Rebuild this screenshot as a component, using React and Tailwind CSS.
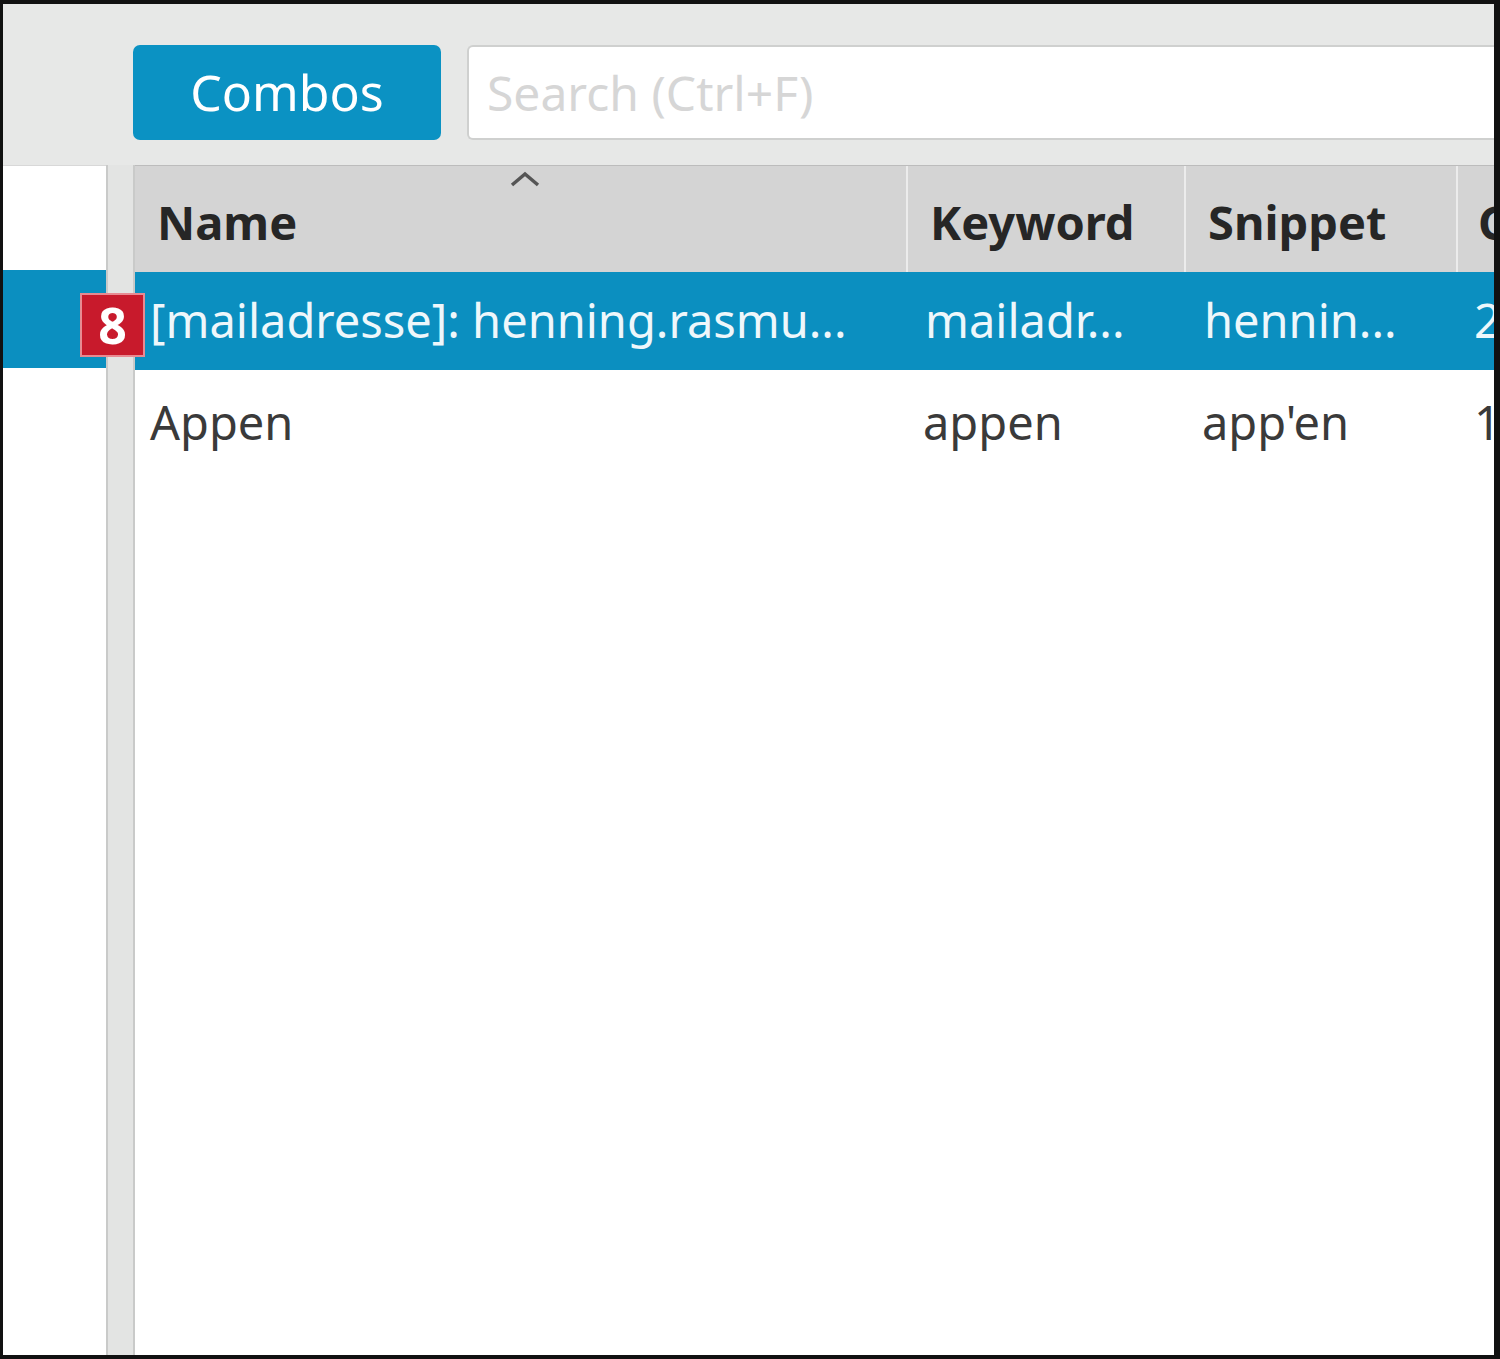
export default function App() {
  const font = { fontFamily: '"Noto Sans", "Open Sans", sans-serif' };
  return (
    <div className="w-[1500px] h-[1359px] bg-[#111] pt-[4px] pl-[3px] pr-[6px] pb-[4px]" style={font}>
      <div className="w-full h-full bg-[#e7e8e7] flex flex-col overflow-hidden">
        {/* top bar */}
        <div className="h-[161px] shrink-0 flex items-start pt-[41px] pl-[130px] gap-[26px]">
          <div className="w-[308px] shrink-0 h-[95px] rounded-[7px] bg-[#0b92c3] flex items-center justify-center text-white text-[50px] leading-none pb-[2px]">
            Combos
          </div>
          <div className="flex-1 h-[95px] bg-white border-2 border-r-0 border-[#cfd0cf] rounded-l-[6px] flex items-center pl-[18px] text-[#d6d6d6] text-[48px] leading-none">
            Search (Ctrl+F)
          </div>
        </div>
        {/* body */}
        <div className="flex-1 flex relative">
          {/* left panel */}
          <div className="w-[103px] shrink-0 bg-white border-t border-[#d8d8d8] flex flex-col">
            <div className="h-[104px]"></div>
            <div className="h-[98px] bg-[#0b8fc0]"></div>
          </div>
          {/* separator */}
          <div className="w-[29px] shrink-0 bg-[#e3e4e3] border-l-2 border-r-2 border-[#c9cac9]"></div>
          {/* table */}
          <div className="flex-1 min-w-0 bg-white flex flex-col">
            <div className="h-[107px] shrink-0 bg-[#d4d4d4] border-t border-[#bcbcbc] flex text-[#262626] font-bold text-[47px] leading-none whitespace-nowrap">
              <div className="w-[773px] shrink-0 border-r-2 border-[#ececec] flex items-center pl-[22px] pt-[6px] relative">
                Name
                <svg className="absolute left-[374px] top-[4px]" width="32" height="18" viewBox="0 0 32 18">
                  <path d="M3 15 L16 4 L29 15" fill="none" stroke="#555" strokeWidth="3.5" />
                </svg>
              </div>
              <div className="w-[278px] shrink-0 border-r-2 border-[#ececec] flex items-center pl-[22px] pt-[6px]">Keyword</div>
              <div className="w-[272px] shrink-0 border-r-2 border-[#ececec] flex items-center pl-[22px] pt-[6px]">Snippet</div>
              <div className="flex-1 flex items-center pl-[20px] pt-[6px] overflow-hidden">C</div>
            </div>
            <div className="h-[98px] shrink-0 bg-[#0b8fc0] flex items-center text-[#eef7fb] text-[47px] leading-none whitespace-nowrap pb-[2px]">
              <div className="w-[773px] shrink-0 pl-[15px]">[mailadresse]: henning.rasmu...</div>
              <div className="w-[278px] shrink-0 pl-[17px]">mailadr...</div>
              <div className="w-[272px] shrink-0 pl-[18px]">hennin...</div>
              <div className="flex-1 pl-[16px] overflow-hidden">2</div>
            </div>
            <div className="h-[104px] shrink-0 flex items-center text-[#3a3a3a] text-[47px] leading-none whitespace-nowrap">
              <div className="w-[773px] shrink-0 pl-[15px]">Appen</div>
              <div className="w-[278px] shrink-0 pl-[15px]">appen</div>
              <div className="w-[272px] shrink-0 pl-[16px]">app'en</div>
              <div className="flex-1 pl-[16px] overflow-hidden">1</div>
            </div>
          </div>
          {/* badge */}
          <div className="absolute left-[77px] top-[128px] w-[65px] h-[64px] bg-[#c81a2c] border-2 border-[#e88a92] flex items-center justify-center text-white font-bold text-[50px] leading-none">
            8
          </div>
        </div>
      </div>
    </div>
  );
}
